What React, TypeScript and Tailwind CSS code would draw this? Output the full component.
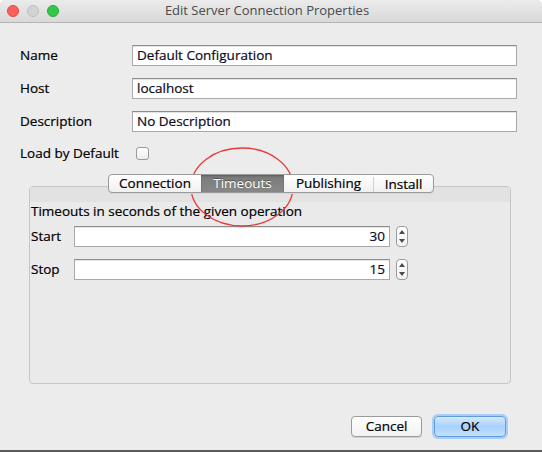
import React from "react";

function TextField({ value, align = "left", className = "" }: { value: string; align?: "left" | "right"; className?: string }) {
  return (
    <div
      className={`h-[21px] bg-white border border-[#a9a9a9] border-t-[#8d8d8d] flex items-center px-[4px] text-[#0a0a1e] shadow-[inset_0_1px_0_#e4e4e4] ${
        align === "right" ? "justify-end" : ""
      } ${className}`}
    >
      {value}
    </div>
  );
}

function Spinner() {
  return (
    <div className="ml-[6px] w-[12px] h-[21px] rounded-[4px] border border-[#9c9c9c] bg-gradient-to-b from-white to-[#f2f2f2] flex flex-col items-center justify-between py-[3px]">
      <svg width="6" height="4" viewBox="0 0 6 4">
        <path d="M3 0 L6 4 L0 4 Z" fill="#4a4a4a" />
      </svg>
      <svg width="6" height="4" viewBox="0 0 6 4">
        <path d="M0 0 L6 0 L3 4 Z" fill="#4a4a4a" />
      </svg>
    </div>
  );
}

const tabs = [
  { label: "Connection", w: "w-[92px]" },
  { label: "Timeouts", w: "w-[83px]", active: true },
  { label: "Publishing", w: "w-[89px]" },
  { label: "Install", w: "w-[60px]" },
];

export default function App() {
  return (
    <div className="relative w-[542px] h-[452px] bg-[#ececec] flex flex-col font-['Open_Sans',sans-serif] text-[13.5px] text-black [-webkit-text-stroke:0.2px] border-b-2 border-[#5c5c5c] rounded-t-[5px] overflow-hidden">
      {/* title bar */}
      <div className="h-[23px] shrink-0 flex items-center bg-gradient-to-b from-[#ebebeb] to-[#d9d9d9] border-b border-[#b3b3b3] relative">
        <div className="flex gap-[8px] pl-[7px]">
          <span className="w-[12px] h-[12px] rounded-full bg-[#fc605b] border border-[#de4a44]" />
          <span className="w-[12px] h-[12px] rounded-full bg-[#d3d3d3] border border-[#bdbdbd]" />
          <span className="w-[12px] h-[12px] rounded-full bg-[#34c749] border border-[#27a83a]" />
        </div>
        <div className="flex-1 text-center text-[13px] text-[#4a4a4a] [-webkit-text-stroke:0px] pr-[67px]">Edit Server Connection Properties</div>
      </div>

      {/* form */}
      <div className="pt-[22px] flex flex-col gap-[12px] pr-[25px]">
        {[
          ["Name", "Default Configuration"],
          ["Host", "localhost"],
          ["Description", "No Description"],
        ].map(([label, value]) => (
          <div key={label} className="flex items-center">
            <div className="w-[132px] pl-[20px]">{label}</div>
            <TextField value={value} className="flex-1" />
          </div>
        ))}
        <div className="flex items-center h-[19px]">
          <div className="w-[136px] pl-[20px]">Load by Default</div>
          <span className="w-[13px] h-[13px] rounded-[3px] border border-[#9a9a9a] bg-gradient-to-b from-white to-[#ededed]" />
        </div>
      </div>

      {/* tabs */}
      <div className="mt-[11px] flex justify-center relative z-10">
        <div className="flex h-[19px] rounded-[4px] border border-[#9a9a9a] bg-gradient-to-b from-white to-[#f0f0f0] shadow-[0_1px_0_#d6d6d6] overflow-hidden">
          {tabs.map((t, i) => (
            <div
              key={t.label}
              className={`${t.w} flex items-center justify-center ${
                t.active
                  ? "bg-gradient-to-b from-[#7a7a7a] to-[#888888] text-white [-webkit-text-stroke:0px] [text-shadow:0_-1px_0_#555] shadow-[inset_0_1px_2px_#5a5a5a]"
                  : ""
              } ${i === 3 ? "border-l border-[#d2d2d2] my-[2px] h-[15px]" : ""}`}
            >
              {t.label}
            </div>
          ))}
        </div>
      </div>

      {/* tab panel */}
      <div className="-mt-[7px] ml-[29px] w-[482px] h-[198px] rounded-[4px] border border-[#c6c6c6] bg-[#eaeaea] flex flex-col">
        <div className="h-[15px] bg-[#e2e2e2] rounded-t-[3px]" />
        <div className="pl-[1px] pt-[1px] leading-[16px]">Timeouts in seconds of the given operation</div>
        <div className="flex flex-col gap-[12px] mt-[7px] pl-[1px]">
          {[
            ["Start", "30"],
            ["Stop", "15"],
          ].map(([label, value]) => (
            <div key={label} className="flex items-center">
              <div className="w-[43px]">{label}</div>
              <TextField value={value} align="right" className="w-[316px]" />
              <Spinner />
            </div>
          ))}
        </div>
      </div>

      {/* buttons */}
      <div className="mt-[32px] flex justify-end gap-[12px] pr-[36px]">
        <div className="w-[71px] h-[21px] rounded-[4px] border border-[#9b9b9b] bg-gradient-to-b from-white to-[#f1f1f1] flex items-center justify-center shadow-[0_1px_0_#d0d0d0]">
          Cancel
        </div>
        <div className="w-[72px] h-[21px] rounded-[4px] border border-[#5f9be0] bg-gradient-to-b from-[#d6eafd] via-[#a8d1fb] to-[#c3e1fd] flex items-center justify-center ring-2 ring-[#a9cdf4]">
          OK
        </div>
      </div>

      {/* annotation */}
      <svg className="absolute left-[190px] top-[147px]" width="104" height="80" viewBox="0 0 104 80">
        <ellipse cx="52" cy="40" rx="51" ry="39" fill="none" stroke="#e8383a" strokeWidth="1.3" />
      </svg>
    </div>
  );
}
